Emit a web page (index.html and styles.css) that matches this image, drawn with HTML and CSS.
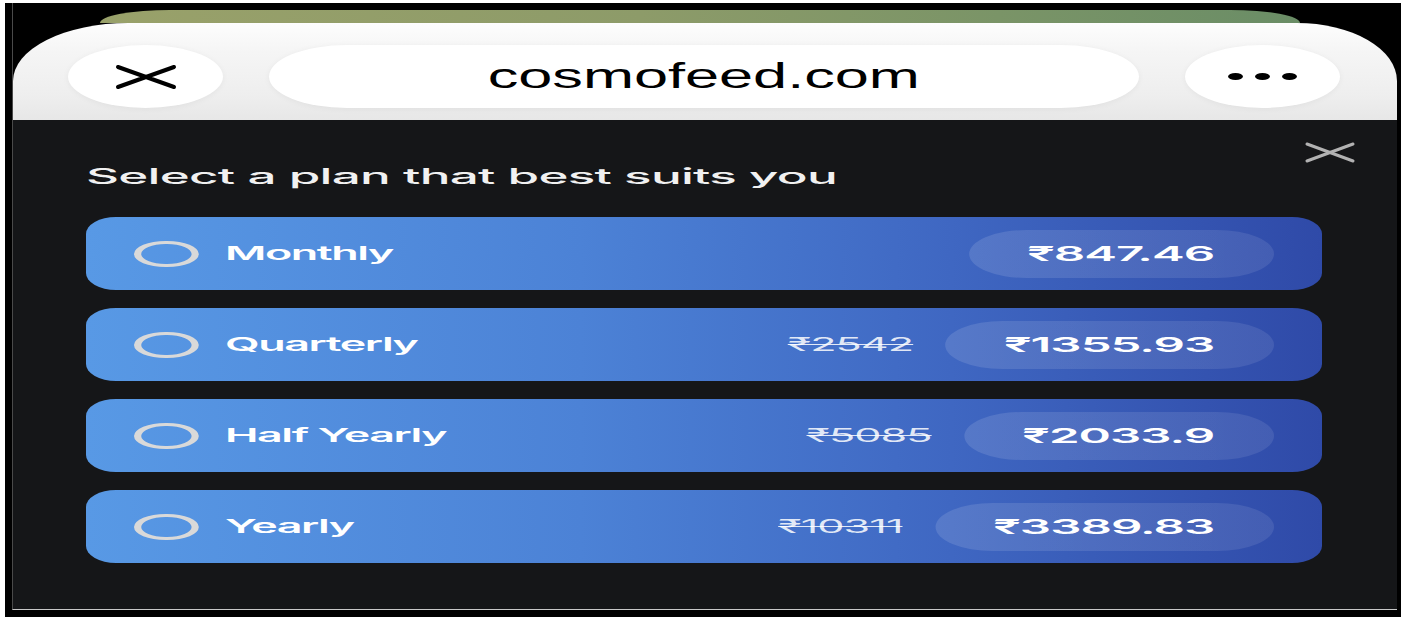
FILE: index.html
```html
<!DOCTYPE html>
<html lang="en">
<head>
<meta charset="utf-8">
<title>Select a plan</title>
<link rel="stylesheet" href="styles.css">
</head>
<body>
<div class="frame">
  <div class="screen">
    <header class="chrome">
      <div class="page-strip"></div>
      <div class="bar">
        <div class="pill pill-round">
          <svg class="x-icon" width="62" height="26" viewBox="0 0 62 26"><path d="M3 3 L59 23 M3 23 L59 3" stroke="#000" stroke-width="4" stroke-linecap="round" fill="none"/></svg>
        </div>
        <div class="pill pill-url"><span class="url-text">cosmofeed.com</span></div>
        <div class="pill pill-round dots"><i></i><i></i><i></i></div>
      </div>
    </header>
    <main class="sheet">
      <button class="sheet-close" aria-label="Close">
        <svg width="50" height="21" viewBox="0 0 50 21"><path d="M2 2 L48 19 M2 19 L48 2" stroke="#b2b2b2" stroke-width="3" stroke-linecap="round" fill="none"/></svg>
      </button>
      <div class="plans">
        <h2 class="title">Select a plan that best suits you</h2>
        <ul class="plan-list">
          <li class="plan">
            <span class="radio"></span>
            <span class="plan-name">Monthly</span>
            <span class="price">₹847.46</span>
          </li>
          <li class="plan">
            <span class="radio"></span>
            <span class="plan-name">Quarterly</span>
            <s class="old-price">₹2542</s>
            <span class="price">₹1355.93</span>
          </li>
          <li class="plan">
            <span class="radio"></span>
            <span class="plan-name">Half Yearly</span>
            <s class="old-price">₹5085</s>
            <span class="price">₹2033.9</span>
          </li>
          <li class="plan">
            <span class="radio"></span>
            <span class="plan-name">Yearly</span>
            <s class="old-price">₹10311</s>
            <span class="price">₹3389.83</span>
          </li>
        </ul>
      </div>
    </main>
  </div>
</div>
</body>
</html>
```

FILE: styles.css
```css
* {
  box-sizing: border-box;
  margin: 0;
  padding: 0;
}

html, body {
  background: #ffffff;
}

body {
  width: 1406px;
  height: 620px;
  overflow: hidden;
  padding: 3px 5px 0 5px;
  font-family: "Inter", "Liberation Sans", "DejaVu Sans", sans-serif;
}

.frame {
  width: 1396px;
  height: 614px;
  background: #000;
  padding: 0 4px 7px 7px;
}

.screen {
  height: 607px;
  border-left: 1px solid #4a4a4a;
  border-bottom: 1px solid #c8c8c8;
  display: flex;
  flex-direction: column;
  background: #000;
}

/* ---------- browser chrome ---------- */
.chrome {
  height: 117px;
  padding-top: 7px;
  display: flex;
  flex-direction: column;
}

.page-strip {
  height: 13px;
  margin: 0 97px 0 87px;
  border-radius: 70px 70px 0 0 / 13px 13px 0 0;
  background: linear-gradient(90deg, #99a16a 0%, #8d9b69 45%, #7a9467 75%, #6a8d66 100%);
}

.bar {
  flex: 1;
  display: flex;
  gap: 46px;
  padding: 22px 57px 12px 55px;
  border-radius: 115px 100px 0 0 / 58px 58px 0 0;
  background: linear-gradient(180deg, #fdfdfd 0%, #f5f5f5 30%, #eeeeee 75%, #e7e7e7 100%);
}

.pill {
  height: 63px;
  background: #ffffff;
  display: flex;
  align-items: center;
  justify-content: center;
  box-shadow: 0 1px 6px rgba(0, 0, 0, 0.05);
}

.pill-round {
  width: 155px;
  border-radius: 50%;
}

.pill-url {
  flex: 1;
  border-radius: 78px / 31.5px;
}

.url-text {
  display: inline-block;
  font-family: "Liberation Sans", Arial, sans-serif;
  font-size: 34.5px;
  color: #000;
  transform: scaleX(1.775);
  transform-origin: center;
}

.dots {
  gap: 12px;
}

.dots i {
  display: block;
  width: 15px;
  height: 7px;
  border-radius: 50%;
  background: #000;
}

/* ---------- plan sheet ---------- */
.sheet {
  flex: 1;
  position: relative;
  background: #151618;
  padding: 43px 0 0 73px;
}

.sheet-close {
  position: absolute;
  top: 22px;
  right: 42px;
  border: 0;
  background: none;
  line-height: 0;
}

.plans {
  width: 515.4px;
  transform: scaleX(2.4);
  transform-origin: 0 0;
}

.title {
  font-size: 21.3px;
  line-height: 26px;
  font-weight: 500;
  color: #f1f1f1;
  letter-spacing: -0.3px;
  white-space: nowrap;
}

.plan-list {
  list-style: none;
  margin-top: 28px;
  display: flex;
  flex-direction: column;
  gap: 18px;
}

.plan {
  height: 73px;
  display: flex;
  align-items: center;
  padding: 0 20.8px 0 20.4px;
  border-radius: 12.5px / 17px;
  background: linear-gradient(90deg, #5899e5 0%, #4c82d6 40%, #3f67c2 70%, #2f4aa8 100%);
  color: #fff;
}

.radio {
  width: 26.25px;
  height: 26px;
  border: 3px solid #d9d9d9;
  border-radius: 50%;
  flex: none;
}

.plan-name {
  margin-left: 11.3px;
  font-size: 18.7px;
  font-weight: 600;
  letter-spacing: -0.6px;
  flex: 1;
  white-space: nowrap;
}

.old-price {
  font-size: 18px;
  font-weight: 400;
  color: rgba(255, 255, 255, 0.85);
  margin-right: 13.3px;
  letter-spacing: -0.4px;
  white-space: nowrap;
}

.price {
  height: 48px;
  display: flex;
  align-items: center;
  padding: 0 24.5px;
  border-radius: 24px;
  background: linear-gradient(90deg, rgba(255, 255, 255, 0.12), rgba(255, 255, 255, 0.09));
  font-size: 20.5px;
  font-weight: 600;
  letter-spacing: -0.42px;
  white-space: nowrap;
}
```
